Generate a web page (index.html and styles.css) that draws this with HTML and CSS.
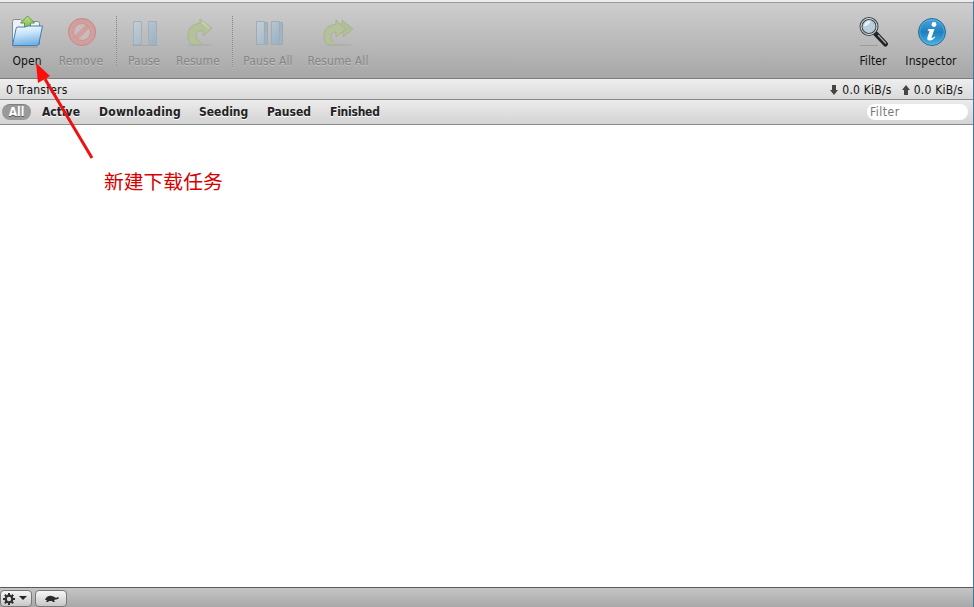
FILE: index.html
```html
<!DOCTYPE html>
<html lang="zh-CN">
<head>
<meta charset="utf-8">
<title>Transfers</title>
<link rel="stylesheet" href="styles.css">
</head>
<body>
<div class="app">
<header class="toolbar">
  <div class="tool open"><svg width="34" height="34" viewBox="0 0 34 34">
    <defs>
      <linearGradient id="folder" x2="0.2" y2="1"><stop stop-color="#fafdff"/><stop offset=".45" stop-color="#c7e3f8"/><stop offset="1" stop-color="#78b3e5"/></linearGradient>
      <linearGradient id="green" x2="0" y2="1"><stop stop-color="#bddd91"/><stop offset="1" stop-color="#75b443"/></linearGradient>
    </defs>
    <path d="M2.500 30.500V6.500q0-2 2-2h6l2 2h15q2 0 2 2v21z" fill="#eef2f5" stroke="#7e8b96"/>
    <path d="M17.500 1l7 7h-4v7h-6V8h-4z" fill="url(#green)" stroke="#61983a"/>
    <path d="M6 14q0-2 2-2h7l3-1h14.500L29 28q-.5 2.500-3 2.500H2.500z" fill="url(#folder)" stroke="#407fb5"/>
    <path d="M3 32h25" stroke="#6f7780" opacity=".5"/></svg><span>Open</span></div>
  <div class="tool remove off"><svg width="34" height="34" viewBox="0 0 34 34"><circle cx="18" cy="17" r="11.500" fill="#c9bcbc" stroke="#d29e9e" stroke-width="5"/><path d="M12 23L24 11" stroke="#d29e9e" stroke-width="5"/><circle cx="18" cy="17" r="13.500" fill="none" stroke="#c68d8d"/><circle cx="18" cy="17" r="8.500" fill="none" stroke="#c89292"/></svg><span>Remove</span></div>
  <i class="sep"></i>
  <div class="tool pause off"><svg width="34" height="34" viewBox="0 0 34 34"><defs><linearGradient id="blue" x2="1" y2="1"><stop stop-color="#c5ced5"/><stop offset="1" stop-color="#98b1c4"/></linearGradient></defs><path d="M6.500 6.500h8v23h-8zM21.500 6.500h8v23h-8z" fill="url(#blue)" stroke="#a0afba"/><path d="M5 30.500h26" stroke="#969a9d" opacity=".5"/></svg><span>Pause</span></div>
  <div class="tool resume off"><svg width="34" height="34" viewBox="0 0 34 34"><ellipse cx="19" cy="30" rx="13" ry="1" fill="#929292" opacity=".25"/><path d="M19 8V4l12 9-9 8v-5q-7-1-7 5 1 5 6 8Q9 32 7 23 5 10 19 8z" fill="#b4c19a" stroke="#a9b68e"/><path d="M21 7l7 6" stroke="#c5d0b0" stroke-width="2"/></svg><span>Resume</span></div>
  <i class="sep second"></i>
  <div class="tool pause-all off"><svg width="34" height="34" viewBox="0 0 34 34"><path d="M9.500 7.500h7v22h-7zM24.500 7.500h7v22h-7z" fill="#a4b3be" stroke="#9eaab3"/><path d="M5.500 6.500h8v23h-8zM20.500 6.500h8v23h-8z" fill="url(#blue)" stroke="#9cacb8"/></svg><span>Pause All</span></div>
  <div class="tool resume-all off"><svg width="34" height="34" viewBox="0 0 34 34"><ellipse cx="18" cy="30" rx="14" ry="1" fill="#929292" opacity=".25"/><path d="M21 5l11 9-10 8v-6l-6-5 5-2z" fill="#b1be98" stroke="#a7b48d"/><path d="M15 9V5l10 9-10 8v-5q-6 0-5 7 1 4 4 6Q5 31 3 24 1 11 15 9z" fill="#b4c19a" stroke="#a7b48d"/></svg><span>Resume All</span></div>
  <div class="spacer"></div>
  <div class="tool filter"><svg width="34" height="34" viewBox="0 0 34 34"><path d="M4 30.500h18" stroke="#878787" opacity=".55"/><path d="M19 18l10.500 11" stroke="#202323" stroke-width="5" stroke-linecap="round"/><path d="M22 20l8 8.500" stroke="#a7abab" stroke-width="1.300"/><circle cx="13" cy="11.500" r="8" fill="#b8cedb" stroke="#3e4345" stroke-width="3"/><circle cx="13" cy="11.500" r="8" fill="none" stroke="#e6eaeb"/><path d="M8 11q1-6 7-5.500Q12 12 8 11" fill="#e6f0f5"/></svg><span>Filter</span></div>
  <div class="tool inspector"><svg width="34" height="34" viewBox="0 0 34 34"><defs><linearGradient id="info" x2="0" y2="1"><stop stop-color="#4ba5dc"/><stop offset=".5" stop-color="#217fbc"/><stop offset="1" stop-color="#48b2e4"/></linearGradient></defs><circle cx="18" cy="17" r="13.500" fill="url(#info)" stroke="#236f9f"/><circle cx="18" cy="17" r="12.300" fill="none" stroke="#78bee5" opacity=".55"/><circle cx="20" cy="9.500" r="2.400" fill="#fff"/><path d="M14.500 14h6l-3 8.500q0 1.500 3-1l.5 1q-3 3.500-6 3-2.500-.5-1.500-3.500l2-6-2-.5z" fill="#fff"/></svg><span>Inspector</span></div>
</header>
<div class="status"><span>0 Transfers</span><div class="speeds"><svg width="8" height="10" viewBox="0 0 8 10"><path d="M2 0h4v5h2L4 10 0 5h2z"/></svg><span>0.0 KiB/s</span><svg class="up" width="8" height="10" viewBox="0 0 8 10"><path d="M2 10h4V5h2L4 0 0 5h2z"/></svg><span>0.0 KiB/s</span></div></div>
<nav class="filters"><b class="all">All</b><b class="active">Active</b><b class="downloading">Downloading</b><b class="seeding">Seeding</b><b class="paused">Paused</b><b class="finished">Finished</b><input type="text" placeholder="Filter"></nav>
<main><p>新建下载任务</p></main>
<footer><div class="button"><svg width="30" height="17" viewBox="0 0 30 17"><g transform="translate(8 8)" stroke="#303030" stroke-width="2"><path d="M0-6V6M-6 0H6M-4.200-4.200l8.400 8.400M4.200-4.200l-8.400 8.400"/><circle r="3.300" fill="#ddd" stroke-width="2.200"/></g><path d="M18 5h8l-4 4z" fill="#252525"/></svg></div><div class="button"><svg width="30" height="17" viewBox="0 0 30 17"><path d="M9 9q2-5 7-4 3 1 4 2l2-1 1 1-1 1-4 1 1 2h-2l-1-1h-3l-1 1h-2l1-2z" fill="#2b2b2b"/></svg></div></footer>
</div>
<svg class="arrow" width="70" height="104" viewBox="0 0 70 104"><path d="M62 98L15 19" stroke="#ee1111" stroke-width="3"/><path d="M6 3l14 13-12 7z" fill="#ff0d0d"/></svg>
</body>
</html>
```
FILE: styles.css
```css
* { box-sizing: border-box; }
body { margin: 0; background: #fff; font: 12px/16px "DejaVu Sans Condensed", "DejaVu Sans", sans-serif; color: #111; overflow: hidden; }
.app { height: 607px; display: flex; flex-direction: column; border-right: 1px solid #347da5; border-top: 2px solid #ededed; }
.toolbar { height: 77px; flex: none; display: flex; background: linear-gradient(#cecece, #a7a7a7); border-top: 1px solid #999; border-bottom: 1px solid #7c7c7c; padding: 12px 12px 0 0; }
.tool { display: flex; flex-direction: column; align-items: center; white-space: nowrap; }
.tool svg { flex: none; margin-bottom: 4px; }
.tool span { letter-spacing: .1px; }
.off { color: #858585; text-shadow: 0 1px #c5c5c5; }
.open, .remove { width: 54px; }
.sep { width: 1px; height: 52px; margin: 1px 7px 0 8px; background: repeating-linear-gradient(#898989 0 1px, #bdbdbd 1px 2px); }
.pause { width: 40px; }
.resume { width: 68px; }
.sep.second { margin: 1px 1px 0 0; }
.pause-all { width: 68px; }
.resume-all { width: 72px; }
.spacer { flex: 1; }
.filter { width: 56px; }
.inspector { width: 60px; }
.status { height: 21px; flex: none; display: flex; justify-content: space-between; align-items: center; padding: 1px 10px 0 6px; background: linear-gradient(#eee, #dadada); border-bottom: 1px solid #898989; letter-spacing: .22px; }
.speeds { display: flex; align-items: center; }
.speeds svg { fill: #454545; margin: 1px 4px 0 0; }
.speeds .up { margin-left: 10px; }
.filters { height: 25px; flex: none; display: flex; align-items: center; background: linear-gradient(#ececec, #d3d3d3); border-bottom: 1px solid #8b8b8b; padding: 0 5px 0 2px; color: #222; text-shadow: 0 1px #fff; }
.filters b { white-space: nowrap; }
.filters .all { width: 29px; height: 16px; line-height: 15px; text-align: center; color: #fff; background: #999; border-radius: 8px; text-shadow: 0 1px #555; border-top: 1px solid #808080; }
.active { width: 57px; margin-left: 11px; }
.downloading { width: 100px; letter-spacing: .25px; }
.seeding { width: 68px; }
.paused { width: 63px; }
.finished { letter-spacing: -.25px; }
input { width: 101px; height: 16px; margin-left: auto; padding: 0 3px; border: 0; border-radius: 8px; outline: 0; font: inherit; letter-spacing: .5px; }
input::placeholder { color: #777; opacity: 1; }
main { flex: 1; padding: 44px 0 0 104px; }
main p { margin: 0; font: 19.8px/24px "Noto Sans CJK SC", sans-serif; color: #d80000; }
footer { flex: none; height: 20px; display: flex; gap: 4px; border-top: 1px solid #595959; background: linear-gradient(#c5c5c5, #a8a8a8); padding-top: 2px; }
.button { width: 32px; height: 17px; border: 1px solid #777; border-radius: 4px; background: linear-gradient(#f7f7f7, #c7c7c7); }
.button + .button { margin-left: -1px; }
.button svg { display: block; }
.arrow { position: absolute; left: 30px; top: 60px; }
```
